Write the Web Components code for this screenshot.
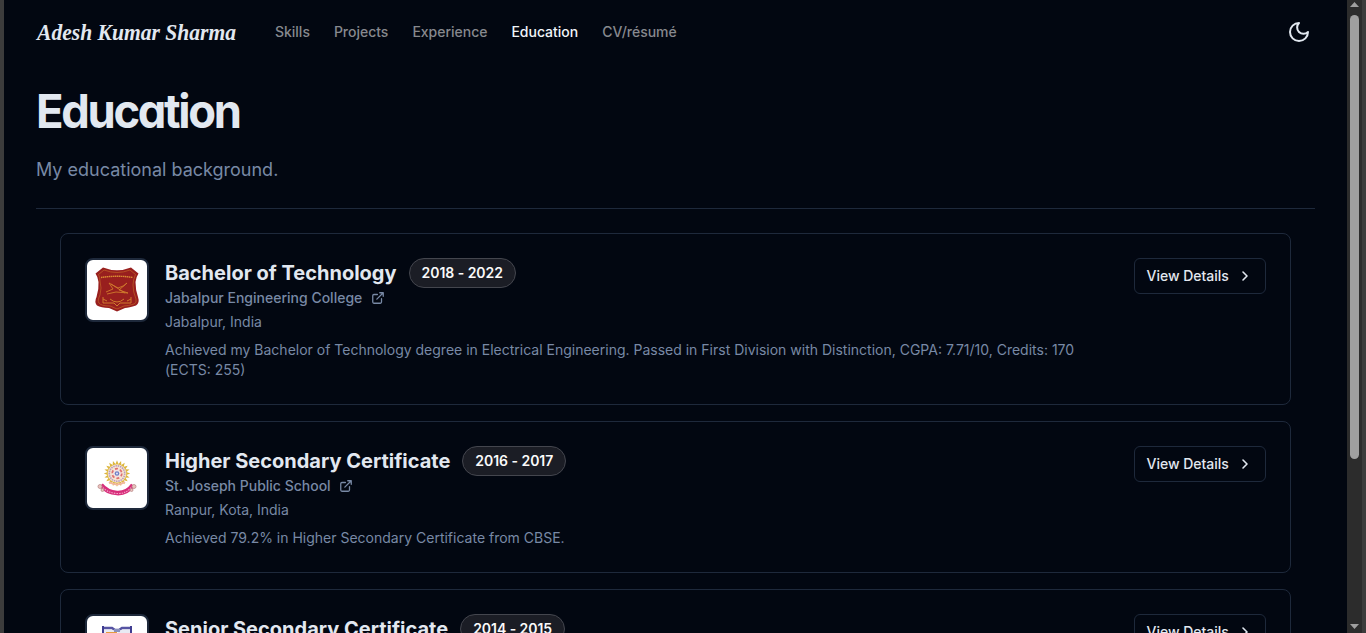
<!DOCTYPE html>
<html lang="en">
<head>
<meta charset="utf-8">
<title>Education</title>
<style>
html,body{margin:0;height:100%;overflow:hidden;background:#020711}
body{font-family:Inter,"Liberation Sans",sans-serif;color:#e2e8f0}
</style>
</head>
<body>
<app-shell>
  <site-header></site-header>
  <page-intro heading="Education">My educational background.</page-intro>
  <education-list>
    <education-card heading="Bachelor of Technology" years="2018 - 2022" school="Jabalpur Engineering College" place="Jabalpur, India">
      <school-crest slot="logo" kind="shield"></school-crest>
      Achieved my Bachelor of Technology degree in Electrical Engineering. Passed in First Division with Distinction, CGPA: 7.71/10, Credits: 170 (ECTS: 255)
    </education-card>
    <education-card heading="Higher Secondary Certificate" years="2016 - 2017" school="St. Joseph Public School" place="Ranpur, Kota, India">
      <school-crest slot="logo" kind="sun"></school-crest>
      Achieved 79.2% in Higher Secondary Certificate from CBSE.
    </education-card>
    <education-card heading="Senior Secondary Certificate" years="2014 - 2015">
      <school-crest slot="logo" kind="book"></school-crest>
    </education-card>
  </education-list>
</app-shell>
<script>
class Base extends HTMLElement {
  connectedCallback() {
    if (this.shadowRoot) return;
    this.attachShadow({mode: 'open'}).innerHTML =
      '<style>*{box-sizing:border-box}:host{display:block;box-sizing:border-box}' + this.css() + '</style>' + this.html();
  }
  css() { return ''; }
  html() { return '<slot></slot>'; }
  at(name) { return this.getAttribute(name) || ''; }
}

customElements.define('app-shell', class extends Base {
  css() { return `:host{display:flex;height:633px;overflow:hidden}
    .edge{flex:none;width:4px;background:#3c3c3c}
    main{flex:1;min-width:0;height:633px;overflow:hidden;background:#020711;padding:0 32px}`; }
  html() { return '<div class="edge"></div><main><slot></slot></main><scroll-rail></scroll-rail><div class="edge"></div>'; }
});

customElements.define('scroll-rail', class extends Base {
  css() { return `:host{display:flex;flex:none;width:15px;height:633px;background:#2c2c2c;flex-direction:column;align-items:center;justify-content:space-between}
    svg{display:block;width:15px;flex:none}
    .thumb{width:9px;height:444px;border-radius:5px;background:#9f9f9f;margin-bottom:auto}`; }
  html() { return `<svg height="15" viewBox="0 0 15 15"><path d="M3 7l4.5-5L12 7z" fill="#9f9f9f"/></svg>
    <div class="thumb"></div>
    <svg height="10" viewBox="0 0 15 10"><path d="M3 1l4.5 5L12 1z" fill="#9f9f9f"/></svg>`; }
});

customElements.define('site-header', class extends Base {
  css() { return `:host{display:flex;height:64px;align-items:center}
    .brand{width:239px;flex:none;line-height:28px}
    .brand svg{display:block;overflow:visible}
    nav{display:flex;gap:24px;font-size:14px;line-height:20px;font-weight:550;letter-spacing:-.015px;color:#87898e;white-space:nowrap}
    .on{color:#f1f5f9}
    .moon{margin-left:auto;margin-right:6px}`; }
  html() { return `<div class="brand"><svg width="201" height="28"><text x="1" y="22" textLength="199" lengthAdjust="spacingAndGlyphs" font-family="'Z003','URW Chancery L','Liberation Serif',serif" font-style="italic" font-weight="700" font-size="23" fill="#e2e8f0">Adesh Kumar Sharma</text></svg></div>
    <nav><span>Skills</span><span>Projects</span><span>Experience</span><span class="on">Education</span><span>CV/résumé</span></nav>
    <svg class="moon" width="20" height="20" viewBox="2 2 20 20" fill="none" stroke="#e2e8f0" stroke-width="2" stroke-linecap="round" stroke-linejoin="round" overflow="visible"><path d="M12 3a6 6 0 0 0 9 9 9 9 0 1 1-9-9Z"/></svg>`; }
});

customElements.define('page-intro', class extends Base {
  css() { return `:host{padding-top:23px;height:145px;border-bottom:1px solid #1e293b;white-space:nowrap}
    h1{margin:0;font-weight:700;font-size:47px;line-height:48px;letter-spacing:-2.4px;font-feature-settings:"cv11";color:#e2e8f0;transform:scaleX(.965);transform-origin:0 0}
    p{margin:21px 0 0;font-size:18px;line-height:28px;color:#7889a5}`; }
  html() { return `<h1>${this.at('heading')}</h1><p><slot></slot></p>`; }
});

customElements.define('education-list', class extends Base {
  css() { return ':host{display:flex;flex-direction:column;gap:16px;padding:24px 24px 0}'; }
});

customElements.define('education-card', class extends Base {
  css() { return `:host{display:flex;gap:16px;align-items:flex-start;padding:24px;border:1px solid #1e293b;border-radius:8px;min-height:152px}
    .info{flex:1;min-width:0;font-size:14px;line-height:20px;color:#7889a5}
    .top{display:flex;align-items:center;gap:12px;height:30px}
    h2{margin:0;font-size:20px;line-height:28px;font-weight:700;color:#e2e8f0;white-space:nowrap}
    .years{height:30px;padding:0 12px;border:1px solid #44464e;border-radius:15px;background:#1b1d25;color:#fafafa;font-size:14px;line-height:28px;font-weight:600;letter-spacing:-.04px;white-space:nowrap}
    .school{display:flex;align-items:center;gap:8.5px;font-weight:500}
    .place{margin-top:4px}
    .text{margin-top:8px;max-width:937px}
    .button{flex:none;display:flex;align-items:center;justify-content:space-between;width:132px;height:36px;border:1px solid #1e293b;border-radius:6px;padding:0 12px 0 11.5px;font-size:14px;font-weight:550;letter-spacing:-.02px;color:#e2e8f0;white-space:nowrap}
    .button span{line-height:20px;margin-bottom:1px}`; }
  html() { return `<slot name="logo"></slot>
    <div class="info"><div class="top"><h2>${this.at('heading')}</h2><span class="years">${this.at('years')}</span></div>
    ${this.at('school') ? `<div class="school">${this.at('school')}<svg width="14" height="14" viewBox="0 0 24 24" fill="none" stroke="#7889a5" stroke-width="2.2" stroke-linecap="round" stroke-linejoin="round"><path d="M15 3h6v6M10 14 21 3M18 13v6a2 2 0 0 1-2 2H5a2 2 0 0 1-2-2V8a2 2 0 0 1 2-2h6"/></svg></div>
    <div class="place">${this.at('place')}</div>` : ''}
    <div class="text"><slot></slot></div></div>
    <div class="button"><span>View Details</span><svg width="16" height="16" viewBox="0 0 24 24" fill="none" stroke="#e2e8f0" stroke-width="2.4" stroke-linecap="round" stroke-linejoin="round"><path d="m9 18 6-6-6-6"/></svg></div>`; }
});

const rays = n => {
  let d = '';
  for (let i = 0; i < n * 2; i++) {
    const r = i % 2 ? 9.5 : 13.2, a = Math.PI * i / n;
    d += (i ? 'L' : 'M') + (30 + r * Math.sin(a)).toFixed(2) + ' ' + (25.5 - r * Math.cos(a)).toFixed(2);
  }
  return d + 'Z';
};
const CRESTS = {
  shield: `<path d="M16 7.500Q30 13 44 7.500L51.500 13.500Q49 17 48.500 22Q48.500 30 51 37Q53 43 49 45.500Q42 47.500 38 48L30 51.500L22 48Q14 47.500 10 45.500Q7 42 9.500 37Q12 29 11.500 22Q11 17 8.500 13.500Z" fill="#981f1e"/>
    <g fill="none" stroke="#bd5a26" stroke-width=".8"><path d="M17 10Q30 15 43 10L48.500 14.500Q46 20 46 25Q46 32 49 39Q50 43 47 44Q41 46 37 46L30 49L23 46Q14 46 12 43Q10 41 13 35Q15 28 13 21Q13 17 11.500 14.500Z"/></g>
    <path d="M14 17.500Q30 15 46 17.500" fill="none" stroke="#d98a32" stroke-width="1.400" stroke-dasharray="1.500 .5"/>
    <path d="M19 32L26 29L22 23L31 28Q38 26 40 23L32 30L41 33L29 32L20 34M24 24L38 33" fill="none" stroke="#d07b2d" stroke-width=".9"/>
    <path d="M16 37V43H27L30 46L33 43H44V37M16 39L20 41M44 39L40 41M23 39Q30 45 37 39" fill="none" stroke="#d07b2d" stroke-width="1"/>`,
  sun: `<path d="${rays(20)}" fill="#dcb63e"/>
    <circle cx="30" cy="25.500" r="9.300" fill="#f7e5cf"/>
    <circle cx="30" cy="25.500" r="7.700" fill="none" stroke="#b99dc0" stroke-width="1.600" stroke-dasharray="1.500 .8"/>
    <circle cx="30" cy="25.500" r="4.800" fill="#f4e2df" stroke="#de7070" stroke-width="1.700" stroke-dasharray="3 2"/>
    <circle cx="30" cy="25.500" r="2.300" fill="#6d7fc5"/><circle cx="30" cy="25.500" r=".9" fill="#eef"/>
    <path d="M22 34Q30 39 38 34" fill="none" stroke="#f1b79f" stroke-width="2"/>
    <path d="M14 37Q20 44.500 30 45T46 37" fill="none" stroke="#d72e7b" stroke-width="4.700"/>
    <path d="M16 39.500Q21 45 30 45.500T44 39.500" fill="none" stroke="#f3a1c5" stroke-width="1.100" stroke-dasharray="1.500 1"/>
    <g fill="#e9c3bd" stroke="#bb8b8b" stroke-width=".8"><circle cx="13" cy="38.500" r="2"/><circle cx="47" cy="38.500" r="2"/><circle cx="15.500" cy="42" r="1.500"/><circle cx="44.500" cy="42" r="1.500"/></g>`,
  book: `<path d="M16 10V28M44 10V28" stroke="#403d91" stroke-width="2"/>
    <path d="M17 12H25L28 14H32L35 12H43" fill="none" stroke="#5654a3" stroke-width="2.400"/>
    <path d="M17 14H26L30 17L34 14H43V28H17Z" fill="#e8eaf3"/><path d="M19 16H30V28H19Z" fill="#e69b3e"/><path d="M27 13H33V16H27Z" fill="#8a91bd"/>`
};
customElements.define('school-crest', class extends Base {
  css() { return `:host{flex:none;width:64px;height:64px;border:2px solid #1e293b;border-radius:8px;background:#fff;overflow:hidden}svg{display:block}`; }
  html() { return `<svg width="60" height="60" viewBox="0 0 60 60">${CRESTS[this.at('kind')]}</svg>`; }
});
</script>
</body>
</html>
